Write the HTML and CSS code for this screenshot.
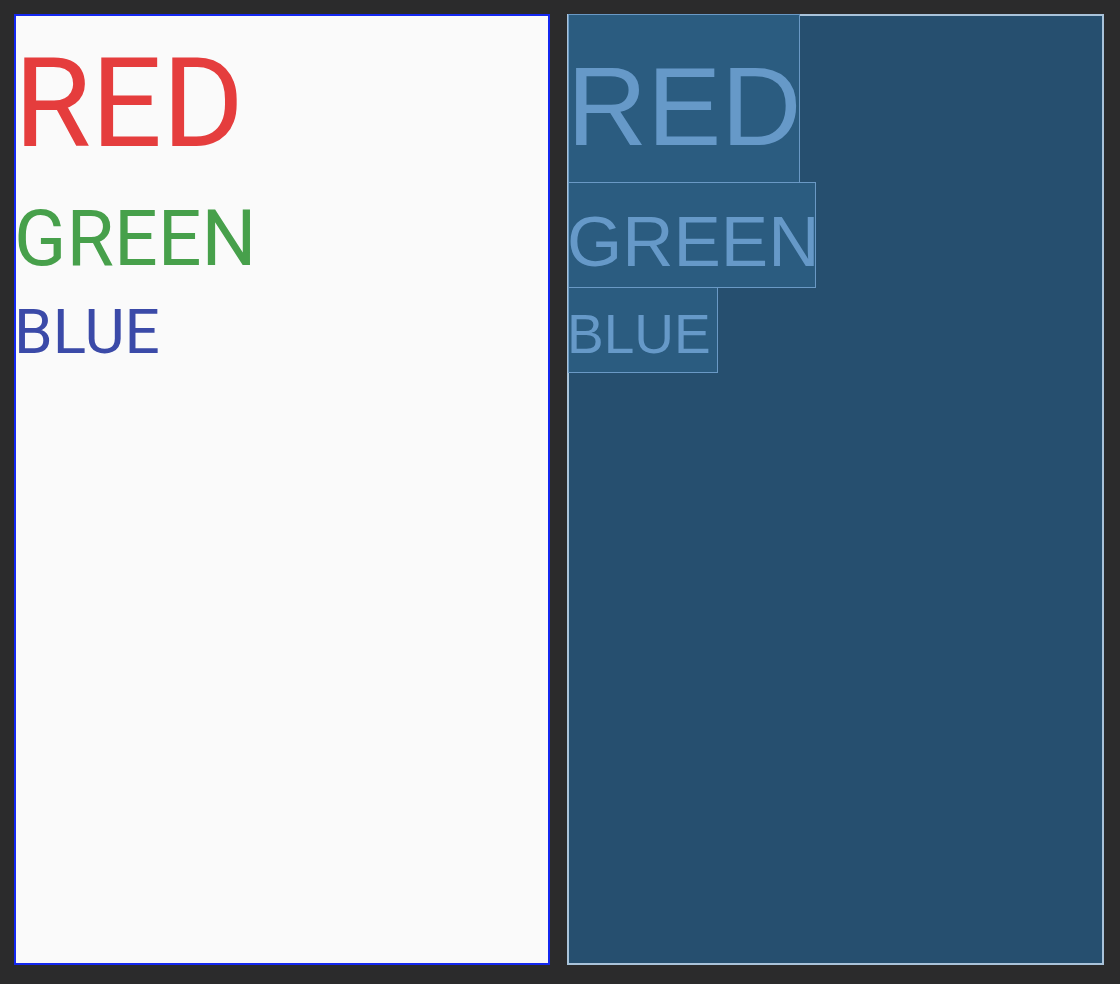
FILE: index.html
```html
<!DOCTYPE html>
<html>
<head>
<meta charset="utf-8">
<link rel="stylesheet" href="styles.css">
</head>
<body>
<div class="stage">
  <div class="design">
    <div class="tv tv-red">RED</div>
    <div class="tv tv-green">GREEN</div>
    <div class="tv tv-blue">BLUE</div>
  </div>
  <div class="blueprint">
    <div class="bp bp-red">RED</div>
    <div class="bp bp-green">GREEN</div>
    <div class="bp bp-blue">BLUE</div>
  </div>
</div>
</body>
</html>
```
FILE: styles.css
```css
html, body {
  margin: 0;
  padding: 0;
  background: #2b2b2c;
}
.stage {
  display: flex;
  gap: 17px;
  padding: 14px 16px 19px 14px;
  width: 1120px;
  height: 984px;
  box-sizing: border-box;
}
.design {
  width: 536px;
  height: 951px;
  box-sizing: border-box;
  background: #fafafa;
  border: 2px solid #1428f0;
  display: flex;
  flex-direction: column;
  align-items: flex-start;
  font-family: Roboto, "Noto Sans", sans-serif;
}
.tv {
  white-space: nowrap;
  margin-left: -2px;
}
.tv-red {
  color: #e53d3d;
  font-size: 125px;
  height: 166px;
  line-height: 176px;
}
.tv-green {
  color: #47a04b;
  font-size: 77px;
  height: 106px;
  line-height: 114px;
}
.tv-blue {
  color: #3b4aa8;
  font-size: 62px;
  height: 84px;
  line-height: 88px;
}
.blueprint {
  width: 537px;
  height: 951px;
  box-sizing: border-box;
  background: #264f6f;
  border: 2px solid #a9c3da;
  display: flex;
  flex-direction: column;
  align-items: flex-start;
  font-family: "Liberation Sans", Arial, sans-serif;
}
.bp {
  box-sizing: border-box;
  background: #2b5c80;
  border: 1px solid #6a99c5;
  color: #6699c8;
  white-space: nowrap;
  margin-left: -1px;
  text-indent: -2px;
}
.bp-red {
  width: 232px;
  height: 169px;
  margin-top: -2px;
  font-size: 111px;
  line-height: 185px;
}
.bp-green {
  width: 248px;
  height: 106px;
  margin-top: -1px;
  font-size: 71px;
  line-height: 118px;
}
.bp-blue {
  width: 150px;
  height: 86px;
  margin-top: -1px;
  font-size: 55px;
  line-height: 92px;
}
```
